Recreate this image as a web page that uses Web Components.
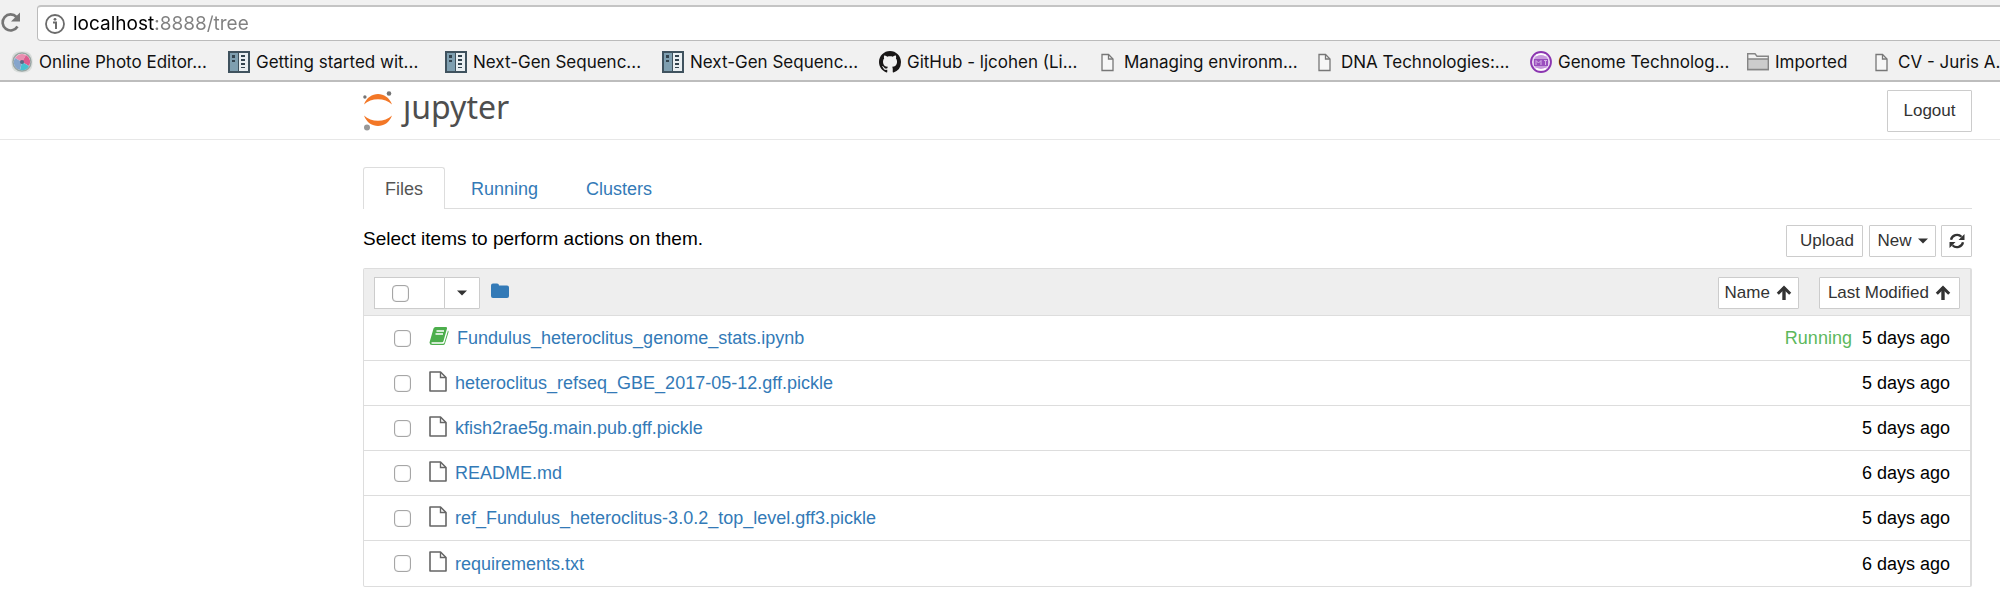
<!DOCTYPE html>
<html lang="en">
<head>
<meta charset="utf-8">
<title>Home</title>
<style>
html, body { margin: 0; background: #fff; }
body { font-family: "Liberation Sans", Arial, sans-serif; color: #000; }
</style>
</head>
<body>
<jupyter-app></jupyter-app>
<script>
const ICONS = {
  reload: [22, 22, '<path d="M17.5 15.5A8 8 0 1 1 16.500 6" fill="none" stroke="#757575" stroke-width="2.600"/><path d="M20 1.500v9h-9z" fill="#757575"/>'],
  info: [22, 22, '<circle cx="11" cy="11" r="9" fill="none" stroke="#6b6b6b" stroke-width="1.800"/><path d="M9 9.500h3v6.500" fill="none" stroke="#6b6b6b" stroke-width="2"/><circle cx="11" cy="6.300" r="1.400" fill="#6b6b6b"/>'],
  photo: [22, 22, '<rect x=".5" y=".5" width="21" height="21" rx="8" fill="#d9dddb"/><circle cx="11" cy="11" r="9" fill="#fff" stroke="#9aa6a4" stroke-width="1.500"/><path d="M11 11L4 7a8 8 0 0 1 11-3z" fill="#e88fb0"/><path d="M11 11l4-7a8 8 0 0 1 3 11z" fill="#dc5c8e"/><path d="M11 11l7 4a8 8 0 0 1-9 4z" fill="#48bfd0"/><path d="M11 11l-2 8A8 8 0 0 1 4 7z" fill="#86a5cc"/><circle cx="11" cy="11" r="2" fill="#5b6785"/>'],
  panel: [22, 22, '<path d="M0 0h22v22H0z" fill="#3f525e"/><path d="M2 2h8v18H2z" fill="#7f9fb0"/><path d="M11 2h9v18h-9z" fill="#e9eff2"/><path d="M4 4h3v3H4zM4 9h3v2H4zM13 4h4v2h-4zM13 8h4v2h-4zM13 12h4v2h-4zM13 16h4v1h-4z" fill="#33444f"/>'],
  github: [22, 22, '<path transform="scale(1.375)" fill="#191717" d="M8 0C3.580 0 0 3.580 0 8c0 3.540 2.290 6.530 5.470 7.590.4.070.55-.17.55-.38 0-.19-.01-.82-.01-1.490-2.010.37-2.530-.49-2.690-.94-.09-.23-.48-.94-.82-1.130-.28-.15-.68-.52-.01-.53.63-.01 1.080.58 1.230.82.72 1.210 1.870.87 2.330.66.070-.52.280-.87.510-1.070-1.780-.2-3.640-.89-3.640-3.950 0-.87.310-1.590.820-2.150-.08-.2-.36-1.020.08-2.120 0 0 .67-.21 2.200.82.640-.18 1.320-.27 2-.27s1.360.09 2 .27c1.530-1.040 2.200-.82 2.200-.82.440 1.100.160 1.920.080 2.120.510.560.820 1.270.820 2.150 0 3.070-1.870 3.750-3.650 3.950.290.250.540.730.540 1.480 0 1.070-.01 1.930-.01 2.200 0 .210.150.460.550.380A8.010 8.010 0 0 0 16 8c0-4.420-3.580-8-8-8z"/>'],
  page: [22, 22, '<path d="M6 3.500h6.500L17 8v11.500H6z" fill="#f7f7f7" stroke="#777" stroke-width="1.300"/><path d="M12.500 3.500V8H17" fill="none" stroke="#777" stroke-width="1.300"/>'],
  genome: [22, 22, '<circle cx="11" cy="11" r="10" fill="#e9d8f2" stroke="#8b35b0" stroke-width="1.800"/><circle cx="11" cy="11" r="7.500" fill="#c79add"/><path d="M4 8h14v7H4z" fill="#9a4fbe"/><path d="M6 14V9.500l2.500 2.500L11 9.500V14M14 9.500h3M15.500 9.500V14" fill="none" stroke="#d6b3e6" stroke-width="1"/><path d="M6 4.500Q11 2 16 4.500M6 17.500Q11 20 16 17.500" fill="none" stroke="#fff" stroke-width="1.500"/>'],
  folder: [22, 22, '<path d="M.7 18.500V2.700h7.300l2 2.500h11.300v13.300z" fill="#f2f2f2" stroke="#858585" stroke-width="1.400"/><path d="M.7 8h20.600v10.500H.7z" fill="#ccc" stroke="#858585" stroke-width="1.400"/>'],
  dir: [18, 16, '<path d="M0 2.500Q0 .5 2 .5h4Q8 .5 8 2.500h8q2 0 2 2V13q0 2-2 2H2q-2 0-2-2z" fill="#337ab7"/>'],
  book: [20, 18, '<path d="M6.500 0H17q1.500 0 1 1.500L14.500 14q-.4 1.200-1.500 1.200H3.200q-1 0-.9.8.1.700 1 .700H14q1 0 1.300-1L19 3.500q.8.700.5 1.700L16 16.500q-.5 1.500-2 1.500H3Q.6 18 .5 15.500L4.500 1.500Q5 0 6.500 0z" fill="#4cae4c"/><path d="M7.500 4h7.500M6.500 7H14" stroke="#fff" stroke-width="1.300"/>'],
  file: [18, 21, '<path d="M1 1h10.500L17 6.500V20H1z" fill="none" stroke="#666" stroke-width="1.600" stroke-linejoin="round"/><path d="M11.500 1v5.500H17" fill="none" stroke="#666" stroke-width="1.400"/>'],
  caret: [10, 6, '<path d="M0 .5h10L5 5.500z" fill="#333"/>'],
  arrow: [16, 16, '<path d="M8 2.500V15" stroke="#333" stroke-width="3.400"/><path d="M1.800 8.800L8 2.600l6.200 6.200" fill="none" stroke="#333" stroke-width="3"/>'],
  refresh: [16, 16, '<path d="M2 6.800A6.200 6.200 0 0 1 12.500 3.700M14 9.200A6.200 6.200 0 0 1 3.500 12.300" fill="none" stroke="#333" stroke-width="2.300"/><path d="M15.500 1v6h-6zM.5 15V9h6z" fill="#333"/>'],
  jupyter: [30, 42, '<path d="M1 14.500C6 .5 24 .5 29 14.500C22 7.500 8 7.500 1 14.500z" fill="#f37726"/><path d="M1 25.500C6 39.500 24 39.500 29 25.500C22 32.500 8 32.500 1 25.500z" fill="#f37726"/><circle cx="1.900" cy="7" r="1.700" fill="#757575"/><circle cx="26" cy="3.500" r="2.300" fill="#757575"/><circle cx="4" cy="37.500" r="3" fill="#989898"/>']
};

class Base extends HTMLElement {
  connectedCallback() {
    if (!this.shadowRoot) this.attachShadow({ mode: 'open' }).innerHTML = this.view();
  }
}

customElements.define('ui-icon', class extends Base {
  view() {
    const [w, h, body] = ICONS[this.getAttribute('name')];
    return `<style>:host{display:inline-block;flex:none;width:${w}px;height:${h}px}svg{display:block}</style>
      <svg width="${w}" height="${h}" viewBox="0 0 ${w} ${h}" aria-hidden="true">${body}</svg>`;
  }
});

customElements.define('ui-button', class extends Base {
  view() {
    return `<style>
      :host { display: block; }
      button { display: flex; align-items: center; justify-content: center; gap: 6px; box-sizing: border-box;
        width: 100%; height: var(--h, 32px); padding: var(--pad, 0 8px); margin: 0; border: 1px solid #ccc;
        border-radius: 1px; background: #fff; color: #333; font: 17px/24px "Liberation Sans", Arial, sans-serif;
        white-space: nowrap; }
    </style><button type="button" aria-label="${this.getAttribute('label') || ''}"><slot></slot></button>`
      .replace(' aria-label=""', '');
  }
});

customElements.define('ui-check', class extends Base {
  view() {
    return `<style>
      :host { display: block; flex: none; width: 17px; height: 17px; }
      input { display: block; appearance: none; box-sizing: border-box; width: 17px; height: 17px; margin: 0;
        border: 1px solid #a6a6a6; border-radius: 4px; background: #fff; box-shadow: inset 0 0 1px #999; }
    </style><input type="checkbox" aria-label="${this.getAttribute('label')}">`;
  }
});

customElements.define('address-bar', class extends Base {
  view() {
    return `<style>
      :host { display: flex; align-items: center; height: 36px; padding-top: 5px; overflow: hidden; }
      button { border: 0; padding: 0; margin: 0 15px 0 0; background: none; }
      label { display: flex; flex: 1; align-items: center; gap: 7px; box-sizing: border-box; height: 36px;
        margin-right: -8px; padding-left: 6px; border: 1px solid #bbb; border-top: 2px solid #c4c4c4;
        border-radius: 4px; background: #fff; }
      input { flex: 1; min-width: 0; height: 28px; padding: 0; border: 0; outline: 0;
        font: 19px/28px Inter, sans-serif; color: #808080;
        background: linear-gradient(90deg, #000 83px, #808080 83px); -webkit-background-clip: text;
        background-clip: text; -webkit-text-fill-color: transparent; }
    </style>
    <button type="button" aria-label="Reload"><ui-icon name="reload"></ui-icon></button>
    <label><ui-icon name="info"></ui-icon><input type="text" aria-label="Address" value="localhost:8888/tree"></label>`;
  }
});

customElements.define('book-mark', class extends Base {
  view() {
    return `<style>
      :host { display: block; flex: none; }
      :host([full]) { width: 196px; }
      :host([folder]) { width: 102px; }
      a { display: flex; align-items: center; gap: 6px; color: #111; text-decoration: none;
        font: 17px/24px Inter, sans-serif; white-space: nowrap; }
    </style><a href="#"><ui-icon name="${this.getAttribute('icon')}"></ui-icon><span><slot></slot></span></a>`;
  }
});

customElements.define('browser-chrome', class extends Base {
  view() {
    return `<style>
      :host { display: block; background: #f1f1f1; border-bottom: 2px solid #bdbdbd; overflow: hidden; }
      nav { display: flex; align-items: center; gap: 21px; box-sizing: border-box; height: 39px;
        padding: 2px 0 0 11px; overflow: hidden; }
    </style>
    <address-bar></address-bar>
    <nav aria-label="Bookmarks">
      <book-mark full icon="photo">Online Photo Editor...</book-mark>
      <book-mark full icon="panel">Getting started wit...</book-mark>
      <book-mark full icon="panel">Next-Gen Sequenc...</book-mark>
      <book-mark full icon="panel">Next-Gen Sequenc...</book-mark>
      <book-mark full icon="github">GitHub - ljcohen (Li...</book-mark>
      <book-mark full icon="page">Managing environm...</book-mark>
      <book-mark full icon="page">DNA Technologies:...</book-mark>
      <book-mark full icon="genome">Genome Technolog...</book-mark>
      <book-mark folder icon="folder">Imported</book-mark>
      <book-mark icon="page">CV - Juris A.</book-mark>
    </nav>`;
  }
});

customElements.define('site-header', class extends Base {
  view() {
    return `<style>
      :host { display: flex; align-items: center; justify-content: space-between; height: 57px;
        padding: 0 28px 0 363px; border-bottom: 1px solid #e7e7e7; }
      a { display: flex; align-items: center; gap: 10px; color: #4e4e4e; text-decoration: none;
        font: 32px/40px "Noto Sans", sans-serif; }
      a span { padding-bottom: 8px; }
      ui-button { --h: 42px; width: 85px; }
    </style>
    <a href="#" aria-label="jupyter"><ui-icon name="jupyter"></ui-icon><span>ȷupyter</span></a>
    <ui-button>Logout</ui-button>`;
  }
});

customElements.define('tab-bar', class extends Base {
  view() {
    return `<style>
      :host { display: flex; gap: 4px; border-bottom: 1px solid #ddd; }
      a { box-sizing: border-box; height: 42px; padding: 8px 21px; border: 1px solid transparent; border-bottom: 0;
        margin-bottom: -1px; color: #337ab7; text-decoration: none; font-size: 18px; line-height: 26px; }
      a[aria-current] { color: #555; background: #fff; border-color: #ddd; border-radius: 3px 3px 0 0; }
    </style>
    <a href="#files" aria-current="page">Files</a><a href="#running">Running</a><a href="#clusters">Clusters</a>`;
  }
});

customElements.define('action-bar', class extends Base {
  view() {
    return `<style>
      :host { display: flex; align-items: center; gap: 5px; padding: 16px 0 11px; }
      p { flex: 1; margin: 0; padding-bottom: 4px; font-size: 19px; line-height: 24px; }
      .upload { width: 77px; --pad: 0 7px 0 12px; margin-right: 1px; }
      .new { width: 67px; }
      .refresh { width: 31px; --pad: 0; }
    </style>
    <p>Select items to perform actions on them.</p>
    <ui-button class="upload">Upload</ui-button>
    <ui-button class="new">New<ui-icon name="caret"></ui-icon></ui-button>
    <ui-button class="refresh" label="Refresh"><ui-icon name="refresh"></ui-icon></ui-button>`;
  }
});

const FILES = [
  ['Fundulus_heteroclitus_genome_stats.ipynb', '5 days ago', true],
  ['heteroclitus_refseq_GBE_2017-05-12.gff.pickle', '5 days ago'],
  ['kfish2rae5g.main.pub.gff.pickle', '5 days ago'],
  ['README.md', '6 days ago'],
  ['ref_Fundulus_heteroclitus-3.0.2_top_level.gff3.pickle', '5 days ago'],
  ['requirements.txt', '6 days ago']
];

customElements.define('file-list', class extends Base {
  view() {
    const rows = FILES.map(([name, date, running]) => `<tr>
      <td><div class="item"><ui-check label="Select ${name}"></ui-check>
        <ui-icon name="${running ? 'book' : 'file'}"></ui-icon><a href="#">${name}</a></div></td>
      <td class="date">${running ? '<span class="running">Running</span>' : ''}${date}</td></tr>`).join('');
    return `<style>
      :host { display: block; border: 1px solid #ddd; border-right-width: 2px; border-radius: 2px; }
      table { width: 100%; border-collapse: separate; border-spacing: 0; font-size: 18px; line-height: 24px; }
      th, td { box-sizing: border-box; padding: 0; text-align: left; font-weight: normal; border-bottom: 1px solid #ddd; }
      thead th { height: 47px; padding-top: 2px; background: #eee; }
      td { height: 45px; }
      tr:last-child td { border-bottom: 0; }
      .tools { display: flex; align-items: center; padding-left: 10px; }
      .all { display: flex; align-items: center; box-sizing: border-box; width: 71px; height: 32px; padding-left: 17px;
        border: 1px solid #ccc; background: #fff; }
      .menu { width: 36px; margin: 0 11px 0 -1px; }
      .dir { display: block; padding-bottom: 4px; }
      .dir ui-icon { display: block; }
      .sort { display: flex; justify-content: flex-end; gap: 20px; padding-right: 10px; }
      .name { --pad: 0 6px; }
      .item { display: flex; align-items: center; padding-left: 30px; }
      .item ui-icon { margin: 0 8px 4px 18px; }
      a { color: #337ab7; text-decoration: none; }
      .date { text-align: right; padding-right: 20px; white-space: nowrap; }
      .running { color: #5cb85c; margin-right: 10px; }
    </style>
    <table>
      <thead><tr>
        <th scope="col"><div class="tools"><span class="all"><ui-check label="Select all"></ui-check></span>
          <ui-button class="menu" label="Select by type"><ui-icon name="caret"></ui-icon></ui-button>
          <a class="dir" href="#" aria-label="Home folder"><ui-icon name="dir"></ui-icon></a></div></th>
        <th scope="col"><div class="sort">
          <ui-button class="name">Name<ui-icon name="arrow"></ui-icon></ui-button>
          <ui-button>Last Modified<ui-icon name="arrow"></ui-icon></ui-button></div></th>
      </tr></thead>
      <tbody>${rows}</tbody>
    </table>`;
  }
});

customElements.define('jupyter-app', class extends Base {
  view() {
    return `<style>
      :host { display: block; }
      main { padding: 27px 28px 28px 363px; }
    </style>
    <browser-chrome></browser-chrome>
    <site-header></site-header>
    <main><tab-bar></tab-bar><action-bar></action-bar><file-list></file-list></main>`;
  }
});
</script>
</body>
</html>
